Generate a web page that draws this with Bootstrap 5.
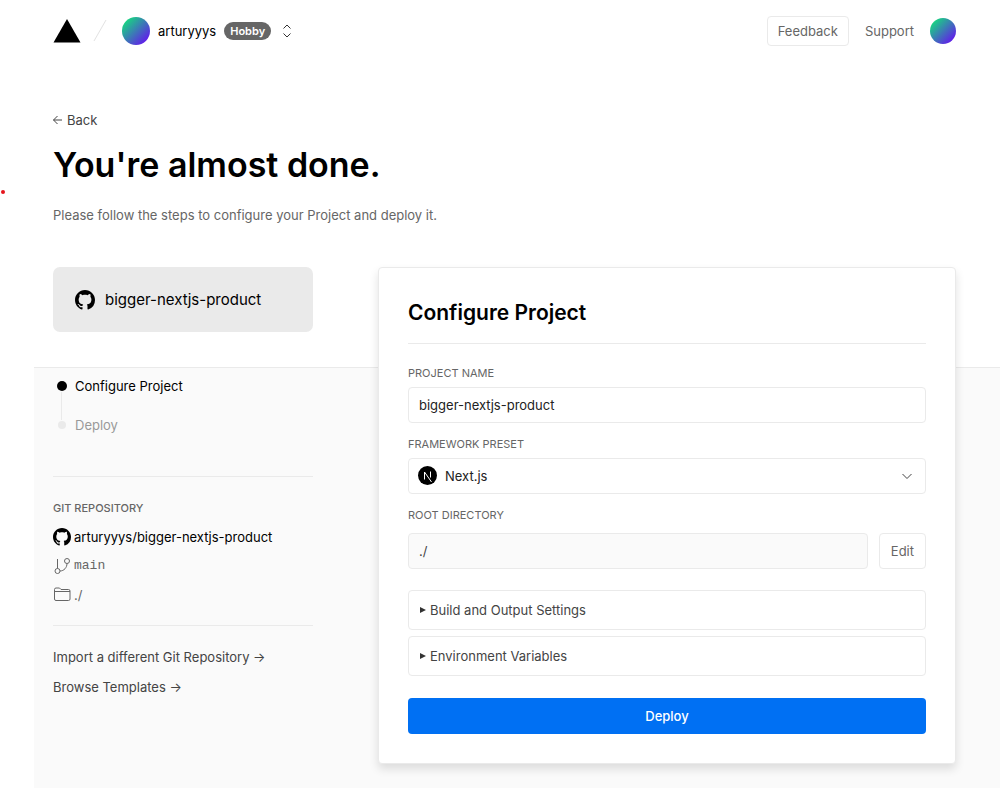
<!DOCTYPE html>
<html lang="en">
<head>
<meta charset="utf-8">
<meta name="viewport" content="width=device-width, initial-scale=1">
<title>Configure Project</title>
<link href="https://cdn.jsdelivr.net/npm/bootstrap@5.3.0/dist/css/bootstrap.min.css" rel="stylesheet">
<style>
  body { font-family: Inter, "Liberation Sans", sans-serif; font-size: 13px; line-height: 20px; color: #000; background: #fff; }
  a { text-decoration: none; }
  svg { display: block; flex: none; }
  .shell { margin-left: 34px; }
  .gutter { padding-left: 19px; padding-right: 44px; }
  .topbar { height: 62px; }
  .avatar { width: 28px; height: 28px; border-radius: 50%; background: linear-gradient(135deg, #12e27a 8%, #6610f2 92%); }
  .avatar-sm { width: 26px; height: 26px; }
  .plan { background: #666; font-size: 11px; line-height: 18px; font-weight: 600; padding: 0 6px; }
  .soft { color: #666; }
  .dark { color: #444; }
  .btn { --bs-btn-font-size: 13px; --bs-btn-line-height: 20px; --bs-btn-border-radius: 4px; }
  .btn-plain { --bs-btn-color: #666; --bs-btn-border-color: #eaeaea; --bs-btn-bg: #fff; --bs-btn-padding-x: 10px; --bs-btn-hover-border-color: #000; --bs-btn-hover-color: #000; }
  .btn-edit { --bs-btn-padding-x: 11px; }
  .btn-deploy { --bs-btn-color: #fff; --bs-btn-bg: #0070f3; --bs-btn-hover-bg: #0060d8; --bs-btn-hover-color: #fff; --bs-btn-font-weight: 500; --bs-btn-padding-y: 7px; margin-top: 22px; }
  .hero { padding-top: 48px; padding-bottom: 42px; }
  .hero h1 { font-size: 34px; line-height: 44px; font-weight: 600; margin: 13px 0 18px; }
  .speck { top: 190px; left: 1px; width: 4px; height: 4px; background: #e5141c; border-radius: 50%; }
  .work { background: linear-gradient(#fff 100px, #eaeaea 100px, #eaeaea 101px, #fafafa 101px); padding-bottom: 24px; gap: 65px; }
  .side { width: 260px; }
  .source { background: #eaeaea; border-radius: 7px; height: 65px; padding: 0 22px; gap: 10px; font-size: 15px; }
  .steps { margin: 44px 0 41px; gap: 19px; }
  .step { gap: 8px; padding-left: 4px; }
  .step i { width: 10px; height: 10px; border-radius: 50%; background: #000; }
  .step.todo { color: #999; }
  .step.todo i { width: 8px; height: 8px; margin: 0 1px; background: #eaeaea; }
  .step.now::after { content: ""; position: absolute; left: 8px; top: 16px; width: 1px; height: 28px; background: #eaeaea; }
  .caps { font-size: 11px; color: #666; display: block; text-transform: uppercase; }
  .side .caps { font-weight: 500; }
  .repo { border: solid #eaeaea; border-width: 1px 0; padding: 21px 0 20px; }
  .repo ul { gap: 9px; margin: 9px 0 0; }
  .repo li { gap: 3px; }
  .mono { font-family: "Liberation Mono", monospace; }
  .more { padding-top: 21px; gap: 10px; }
  .panel { border: 1px solid #eaeaea; border-radius: 4px; background: #fff; padding: 29px; box-shadow: 0 5px 10px rgba(0,0,0,.12); }
  .panel h2 { font-size: 21px; line-height: 32px; font-weight: 600; padding-bottom: 14px; border-bottom: 1px solid #eaeaea; margin-bottom: 19px; }
  .panel .caps { margin-bottom: 4px; }
  .field { margin-bottom: 11px; }
  .form-control, .form-select { font-size: 13px; line-height: 20px; padding: 7px 10px; border-color: #eaeaea; border-radius: 4px; color: #222; height: 36px; }
  .form-control:disabled { background: #fafafa; color: #444; }
  .form-select { padding-left: 36px; background-image: none; }
  .framework svg { position: absolute; top: 8px; left: 10px; pointer-events: none; }
  .framework svg.caret { top: 12px; left: auto; right: 13px; }
  .rootline { gap: 11px; }
  .folds { gap: 6px; margin-top: 21px; }
  .folds details { border: 1px solid #eaeaea; border-radius: 4px; padding: 9px 10px; color: #444; }
  .folds summary { list-style: none; display: flex; align-items: center; gap: 4px; }
  .folds details[open] svg { transform: rotate(90deg); }
</style>
</head>
<body>
<svg width="0" height="0" class="position-absolute" aria-hidden="true">
  <symbol id="octo" viewBox="0 0 16 16"><path d="M8 0C3.58 0 0 3.58 0 8c0 3.54 2.29 6.53 5.47 7.59.4.07.55-.17.55-.38 0-.19-.01-.82-.01-1.49-2.01.37-2.53-.49-2.69-.94-.09-.23-.48-.94-.82-1.13-.28-.15-.68-.52-.01-.53.63-.01 1.08.58 1.23.82.72 1.21 1.87.87 2.33.66.07-.52.28-.87.51-1.07-1.78-.2-3.64-.89-3.64-3.95 0-.87.31-1.59.82-2.15-.08-.2-.36-1.02.08-2.12 0 0 .67-.21 2.2.82.64-.18 1.32-.27 2-.27s1.36.09 2 .27c1.53-1.04 2.2-.82 2.2-.82.44 1.1.16 1.92.08 2.12.51.56.82 1.27.82 2.15 0 3.07-1.87 3.75-3.65 3.95.29.25.54.73.54 1.48 0 1.07-.01 1.93-.01 2.2 0 .21.15.46.55.38A8.01 8.01 0 0 0 16 8c0-4.42-3.58-8-8-8z"/></symbol>
</svg>
<span class="speck position-absolute" aria-hidden="true"></span>
<div class="shell d-flex flex-column min-vh-100">
  <header class="topbar gutter d-flex align-items-center justify-content-between">
    <div class="d-flex align-items-center">
      <a href="#" aria-label="Home"><svg width="28" height="24" viewBox="0 0 28 24"><path d="M14 0 27.500 23.500H.5z"/></svg></a>
      <svg class="ms-2 me-2" width="25" height="24" viewBox="0 0 25 24" fill="none" stroke="#e2e2e2"><path d="M17 1 5 22"/></svg>
      <span class="avatar"></span>
      <span class="ms-2">arturyyys</span>
      <span class="plan badge rounded-pill ms-2">Hobby</span>
      <button class="btn p-0 border-0 ms-2" aria-label="Switch account"><svg width="16" height="16" viewBox="0 0 16 16" fill="none" stroke="#333"><path d="M4.500 5.500 8 2l3.500 3.500M4.500 10.500 8 14l3.500-3.500"/></svg></button>
    </div>
    <div class="d-flex align-items-center">
      <button class="btn btn-plain py-1 me-3">Feedback</button>
      <a href="#" class="soft me-3">Support</a>
      <span class="avatar avatar-sm"></span>
    </div>
  </header>

  <section class="hero gutter">
    <a href="#" class="dark d-inline-flex align-items-center gap-1"><svg width="10" height="10" viewBox="0 0 10 10" fill="none" stroke="#444"><path d="M9 5H.5M4.500 1l-4 4 4 4"/></svg>Back</a>
    <h1>You're almost done.</h1>
    <p class="soft m-0">Please follow the steps to configure your Project and deploy it.</p>
  </section>

  <main class="work gutter flex-grow-1 d-flex flex-column flex-lg-row align-items-lg-start">
    <aside class="side flex-shrink-0">
      <div class="source d-flex align-items-center"><svg width="20" height="20"><use href="#octo"/></svg>bigger-nextjs-product</div>
      <div class="steps d-flex flex-column">
        <div class="step now position-relative d-flex align-items-center"><i></i>Configure Project</div>
        <div class="step todo d-flex align-items-center"><i></i>Deploy</div>
      </div>
      <div class="repo">
        <span class="caps">Git Repository</span>
        <ul class="list-unstyled d-flex flex-column">
          <li class="d-flex align-items-center"><svg width="18" height="18"><use href="#octo"/></svg><a href="#" class="text-black">arturyyys/bigger-nextjs-product</a></li>
          <li class="d-flex align-items-center soft mono"><svg width="18" height="18" viewBox="0 0 18 18" fill="none" stroke="#666"><path d="M4.500 2v9.500M14 6.500c0 4-3 7.500-7 7.500"/><circle cx="4.500" cy="14" r="2.500"/><circle cx="14" cy="4" r="2.500"/></svg>main</li>
          <li class="d-flex align-items-center soft"><svg width="18" height="18" viewBox="0 0 18 18" fill="none" stroke="#666"><path d="M1.500 5V3.500a1.500 1.500 0 0 1 1.500-1.500h3.500l1.500 1.500h7.500a1.500 1.500 0 0 1 1.500 1.500v8a1.500 1.500 0 0 1-1.500 1.500H3a1.500 1.500 0 0 1-1.500-1.500zM1.500 5.500H17"/></svg>./</li>
        </ul>
      </div>
      <div class="more d-flex flex-column align-items-start">
        <a href="#" class="dark">Import a different Git Repository →</a>
        <a href="#" class="dark">Browse Templates →</a>
      </div>
    </aside>

    <form class="panel flex-grow-1" onsubmit="return false">
      <h2>Configure Project</h2>
      <div class="field">
        <label class="caps" for="name">Project Name</label>
        <input class="form-control" id="name" value="bigger-nextjs-product">
      </div>
      <div class="field">
        <label class="caps" for="preset">Framework Preset</label>
        <div class="framework position-relative">
          <select class="form-select" id="preset"><option>Next.js</option></select>
          <svg width="19" height="19" viewBox="0 0 19 19" fill="none"><circle cx="9.500" cy="9.500" r="9.500" fill="#000"/><path d="M6.500 13.500V6l7 10M12.500 5.500v6" stroke="#fff"/></svg>
          <svg class="caret" width="12" height="12" viewBox="0 0 12 12" fill="none" stroke="#444"><path d="m1.500 4 4.500 4.500L10.500 4"/></svg>
        </div>
      </div>
      <label class="caps mb-2" for="root">Root Directory</label>
      <div class="rootline d-flex">
        <input class="form-control" id="root" value="./" disabled>
        <button type="button" class="btn btn-plain btn-edit flex-shrink-0">Edit</button>
      </div>
      <div class="folds d-flex flex-column">
        <details><summary><svg width="7" height="6" viewBox="0 0 7 6"><path d="M1 0v6l6-3z" fill="#333"/></svg>Build and Output Settings</summary></details>
        <details><summary><svg width="7" height="6" viewBox="0 0 7 6"><path d="M1 0v6l6-3z" fill="#333"/></svg>Environment Variables</summary></details>
      </div>
      <button class="btn btn-deploy w-100">Deploy</button>
    </form>
  </main>
</div>
<script src="https://cdn.jsdelivr.net/npm/bootstrap@5.3.0/dist/js/bootstrap.bundle.min.js"></script>
</body>
</html>
